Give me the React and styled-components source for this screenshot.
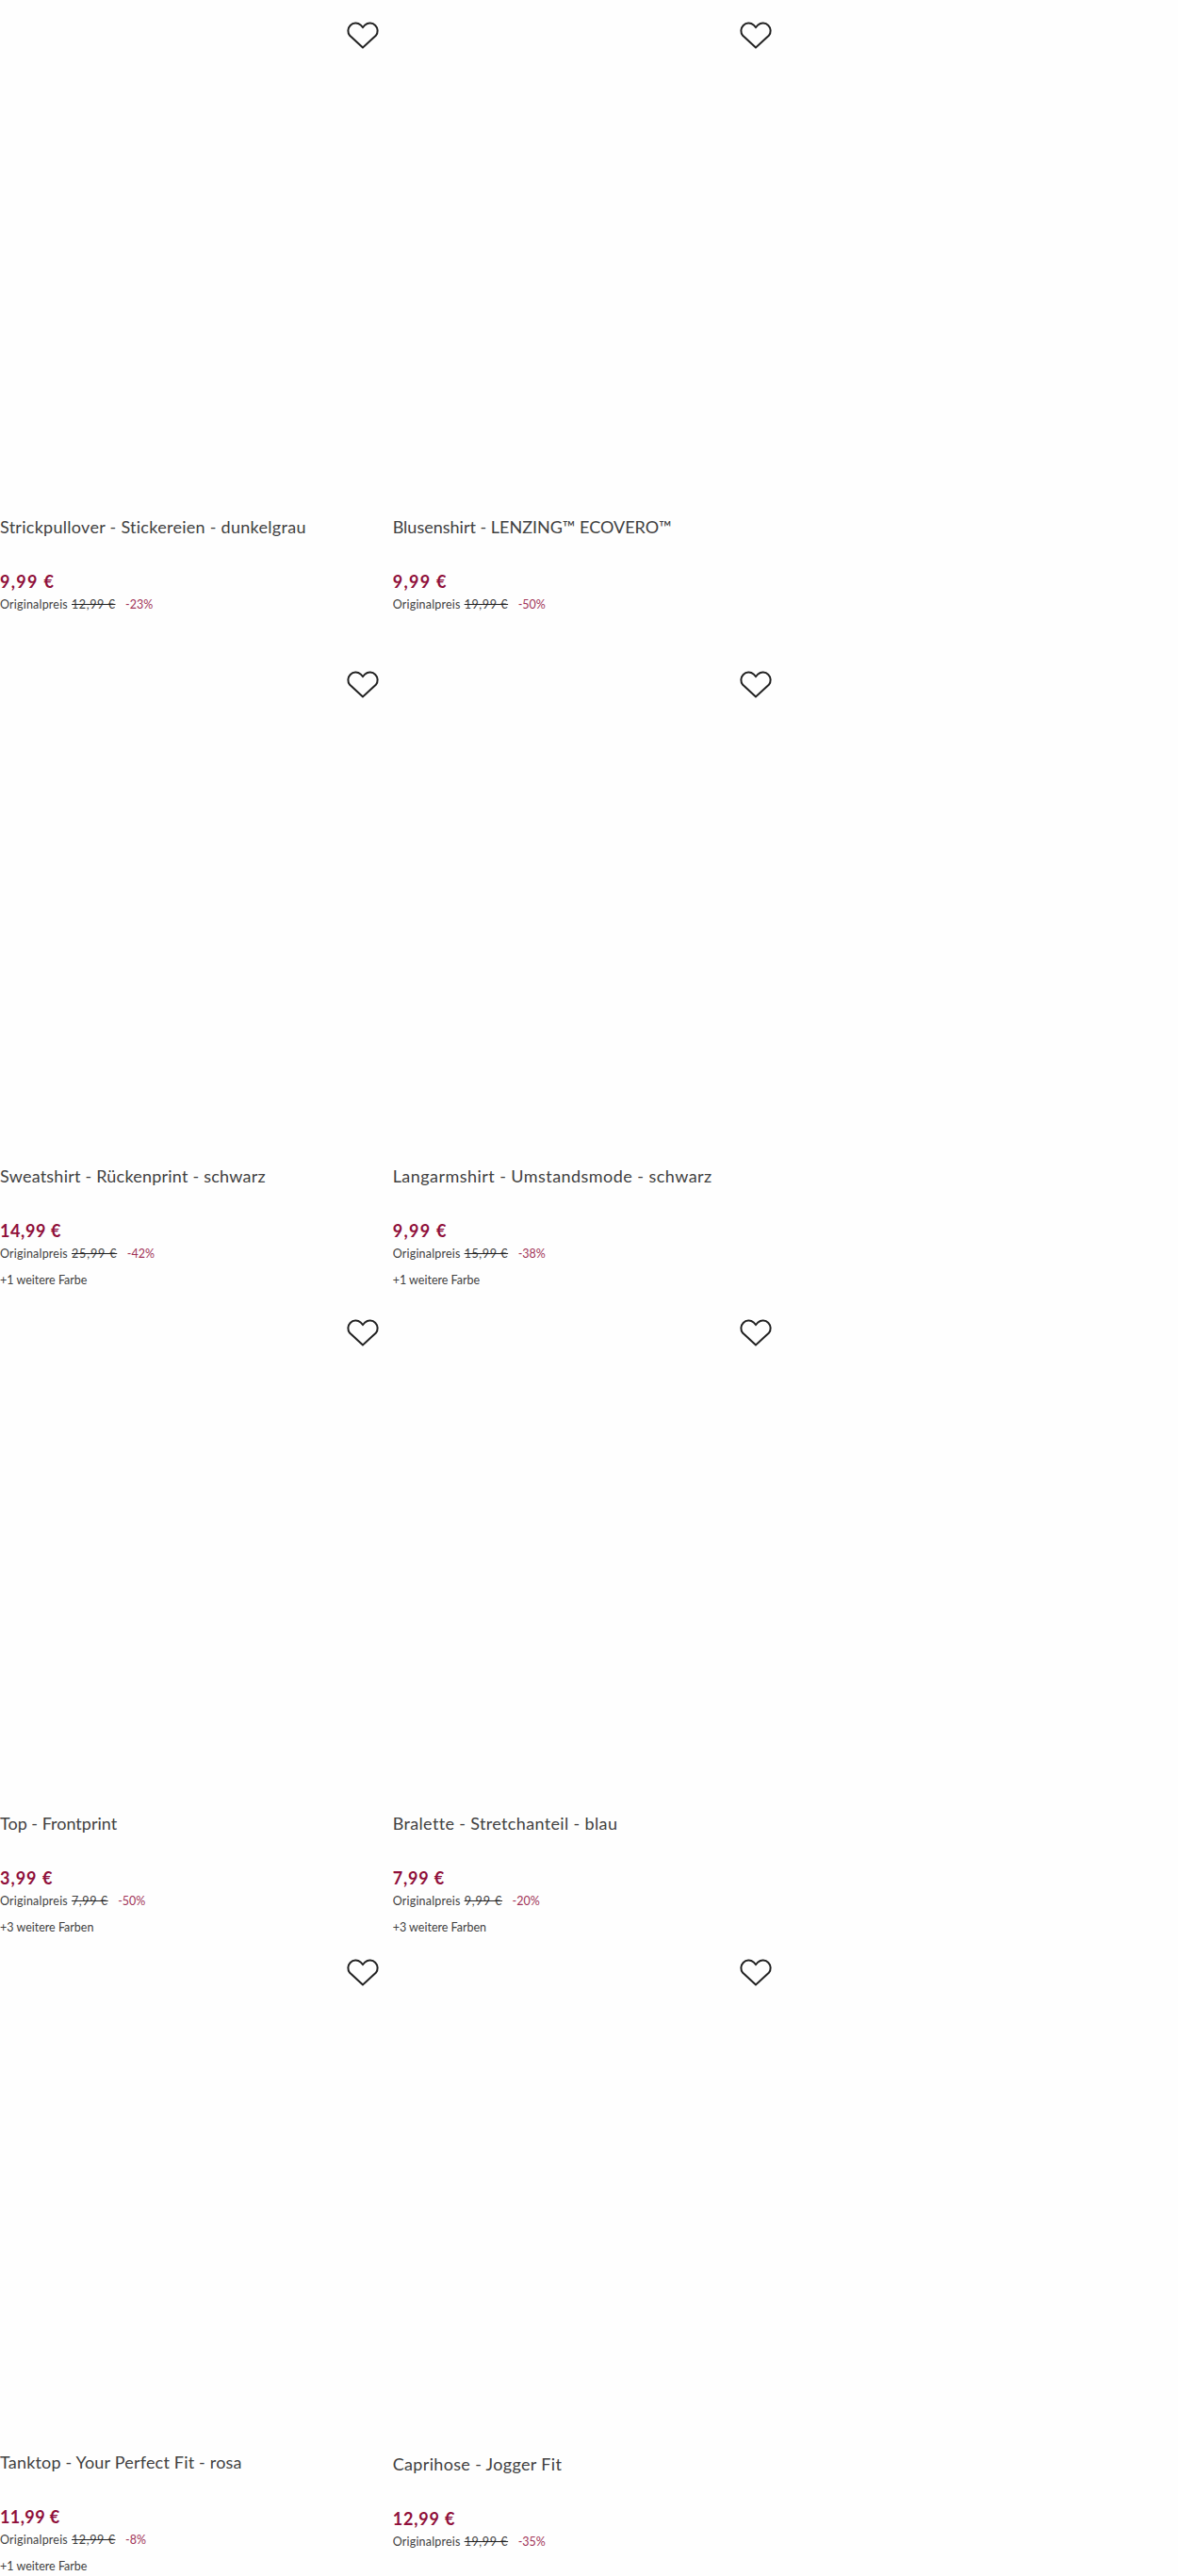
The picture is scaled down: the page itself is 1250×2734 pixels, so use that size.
import React from 'react'
import styled, { createGlobalStyle } from 'styled-components'

const GlobalStyle = createGlobalStyle`
  body {
    margin: 0;
    background: #fefefe;
    color: #414141;
    font-family: Lato, "Open Sans", sans-serif;
  }
`

const ProductGrid = styled.main`
  display: grid;
  grid-template-columns: repeat(3, 1fr);
  grid-template-rows: 689px 688px 679px 678px;
  height: 2734px;
  overflow: hidden;
`

const ProductCard = styled.article`
  display: flex;
  flex-direction: column;
  align-items: flex-start;
  grid-column: ${props => props.$column};
  white-space: nowrap;
`

const ProductImage = styled.div`
  display: flex;
  justify-content: flex-end;
  box-sizing: border-box;
  width: 403px;
  height: 547px;
  padding-top: 21.5px;
`

const WishlistButton = styled.button`
  display: block;
  width: 36px;
  height: 32px;
  padding: 0;
  border: 0;
  background: none;
  cursor: pointer;
`

const ProductName = styled.h2`
  height: 24px;
  margin: 0 0 34px;
  font-size: 18px;
  font-weight: 400;
  line-height: 24px;
  letter-spacing: ${props => props.$tracking}px;
`

const Price = styled.div`
  height: 24px;
  color: #8f0f3a;
  font-size: 18px;
  font-weight: 700;
  line-height: 24px;
  letter-spacing: ${props => props.$tracking}px;
`

const PriceInfo = styled.div`
  display: flex;
  height: 20px;
  margin-top: 3px;
  font-size: 12.5px;
  line-height: 20px;
`

const PriceLabel = styled.span`
  width: 76px;
  letter-spacing: 0.2px;
`

const OldPrice = styled.s`
  margin-right: 10.5px;
  text-decoration-color: #222;
  letter-spacing: ${props => props.$tracking}px;
`

const Discount = styled.span`
  color: #a13358;
`

const Colors = styled.div`
  margin-top: 8px;
  font-size: 12.5px;
  line-height: 20px;
`

// tracking: letter spacing of [name, price, old price]
const products = [
  { name: 'Strickpullover - Stickereien - dunkelgrau', price: '9,99 €', old: '12,99 €', discount: '-23%', tracking: [0.28, 1.3, 0.6] },
  { name: 'Blusenshirt - LENZING™ ECOVERO™', price: '9,99 €', old: '19,99 €', discount: '-50%', tracking: [0, 1.3, 0.6] },
  { name: 'Sweatshirt - Rückenprint - schwarz', price: '14,99 €', old: '25,99 €', discount: '-42%', colors: '+1 weitere Farbe', tracking: [0.22, 0.6, 0.85] },
  { name: 'Langarmshirt - Umstandsmode - schwarz', price: '9,99 €', old: '15,99 €', discount: '-38%', colors: '+1 weitere Farbe', tracking: [0.45, 1.3, 0.6] },
  { name: 'Top - Frontprint', price: '3,99 €', old: '7,99 €', discount: '-50%', colors: '+3 weitere Farben', tracking: [0, 1, 0.6] },
  { name: 'Bralette - Stretchanteil - blau', price: '7,99 €', old: '9,99 €', discount: '-20%', colors: '+3 weitere Farben', tracking: [0.35, 0.85, 0.9] },
  { name: 'Tanktop - Your Perfect Fit - rosa', price: '11,99 €', old: '12,99 €', discount: '-8%', colors: '+1 weitere Farbe', tracking: [0.19, 0.4, 0.6] },
  { name: 'Caprihose - Jogger Fit', price: '12,99 €', old: '19,99 €', discount: '-35%', tracking: [0.34, 0.85, 0.6] }
]

const HeartIcon = () => (
  <svg width="36" height="32" viewBox="0 0 36 32" fill="none" stroke="#222" strokeWidth="2">
    <path d="M18 28.4 L4.2 15.8 A8.1 8.1 0 0 1 15.6 4.4 L18 7.1 L20.4 4.4 A8.1 8.1 0 0 1 31.8 15.8 Z" />
  </svg>
)

const Product = ({ product, column }) => {
  const [nameTracking, priceTracking, oldTracking] = product.tracking
  return (
    <ProductCard $column={column}>
      <ProductImage>
        <WishlistButton type="button">
          <HeartIcon />
        </WishlistButton>
      </ProductImage>
      <ProductName $tracking={nameTracking}>{product.name}</ProductName>
      <Price $tracking={priceTracking}>{product.price}</Price>
      <PriceInfo>
        <PriceLabel>Originalpreis</PriceLabel>
        <OldPrice $tracking={oldTracking}>{product.old}</OldPrice>
        <Discount>{product.discount}</Discount>
      </PriceInfo>
      {product.colors && <Colors>{product.colors}</Colors>}
    </ProductCard>
  )
}

const App = () => (
  <>
    <GlobalStyle />
    <ProductGrid>
      {products.map((product, i) => (
        <Product key={product.name} product={product} column={i % 2 + 1} />
      ))}
    </ProductGrid>
  </>
)

export default App
